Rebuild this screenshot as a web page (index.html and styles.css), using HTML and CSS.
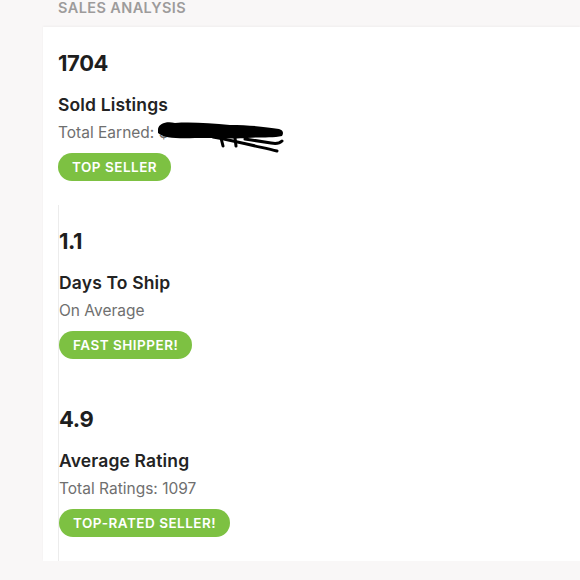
FILE: index.html
```html
<!DOCTYPE html>
<html>
<head>
<meta charset="utf-8">
<link rel="stylesheet" href="styles.css">
</head>
<body>
<div class="header">SALES ANALYSIS</div>
<div class="card">
  <div class="section">
    <div class="num">1704</div>
    <div class="title">Sold Listings</div>
    <div class="sub redact-wrap">Total Earned: $<svg class="scribble" width="132" height="36" viewBox="0 0 132 36"><path d="M3 10 C4 4 12 2 20 4 C35 3 55 4 75 6 C95 6 112 8 124 10 C128 11 129 14 127 17 C118 19 104 18 92 19 C80 20 60 19 40 19 C24 20 8 19 3 14 Z" fill="#000"/><path d="M58 18 C80 22 100 27 122 32" stroke="#000" stroke-width="3" fill="none" stroke-linecap="round"/><path d="M66 19 L68 27 M80 19 L81 27 M90 20 L116 24 C121 25 125 24 127 22" stroke="#000" stroke-width="3" fill="none" stroke-linecap="round"/></svg></div>
    <div class="badge">TOP SELLER</div>
  </div>
  <div class="rest">
    <div class="section">
      <div class="num">1.1</div>
      <div class="title">Days To Ship</div>
      <div class="sub">On Average</div>
      <div class="badge">FAST SHIPPER!</div>
    </div>
    <div class="section">
      <div class="num">4.9</div>
      <div class="title">Average Rating</div>
      <div class="sub">Total Ratings: 1097</div>
      <div class="badge">TOP-RATED SELLER!</div>
    </div>
  </div>
</div>
</body>
</html>
```
FILE: styles.css
```css
html, body {
  margin: 0;
  padding: 0;
}
body {
  background: #f9f7f7;
  font-family: Inter, "Liberation Sans", sans-serif;
  width: 580px;
  height: 580px;
  overflow: hidden;
}
.header {
  height: 27px;
  box-sizing: border-box;
  padding-left: 58px;
  font-size: 14.5px;
  line-height: 15px;
  font-weight: 600;
  letter-spacing: 0.4px;
  color: #9d9b9b;
}
.card {
  margin-left: 43px;
  background: #fff;
  padding-left: 15px;
  box-shadow: 0 -1px 2px rgba(0,0,0,0.04);
}
.rest {
  border-left: 1px solid #ececec;
}
.section {
  display: flex;
  flex-direction: column;
  align-items: flex-start;
  padding: 25px 0 24px;
}
.num {
  font-size: 22px;
  line-height: 22px;
  font-weight: 700;
  letter-spacing: -0.4px;
  color: #1e1e1e;
  margin-bottom: 22px;
}
.title {
  font-size: 17.5px;
  line-height: 17px;
  font-weight: 600;
  letter-spacing: 0.15px;
  color: #232323;
  margin-bottom: 12px;
}
.sub {
  font-size: 15.5px;
  line-height: 16px;
  color: #6f6f6f;
  margin-bottom: 12px;
}
.redact-wrap {
  position: relative;
}
.scribble {
  position: absolute;
  left: 97px;
  top: -6px;
}
.badge {
  height: 28px;
  line-height: 28px;
  padding: 0 14px;
  border-radius: 14px;
  background: #7dc142;
  color: #fff;
  font-size: 13.5px;
  font-weight: 600;
  letter-spacing: 0.5px;
}
```
